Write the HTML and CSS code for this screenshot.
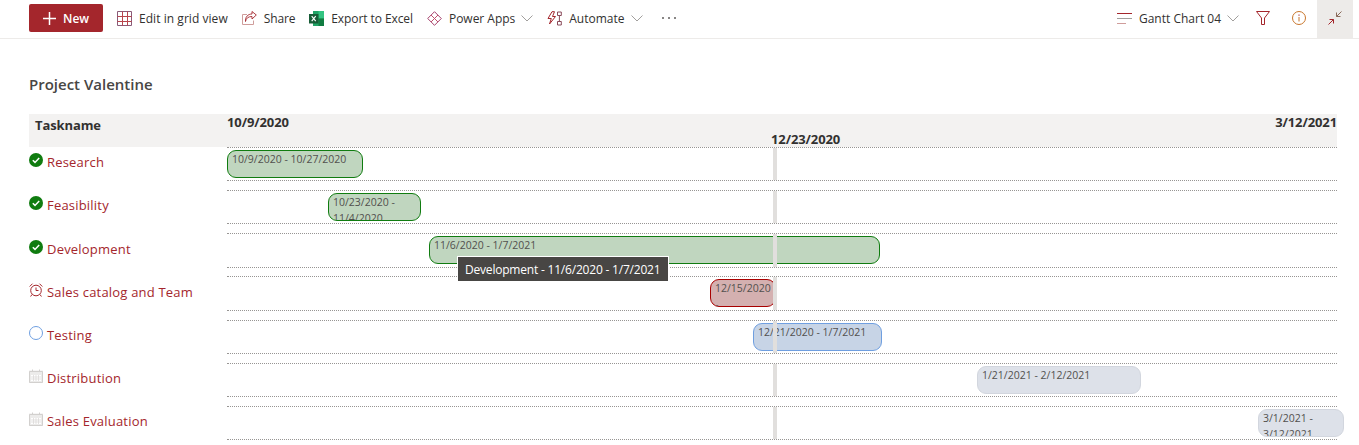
FILE: index.html
```html
<!DOCTYPE html>
<html lang="en">
<head>
  <meta charset="UTF-8">
  <title>Project Valentine</title>
  <link rel="stylesheet" href="styles.css">
</head>
<body>
  <div class="toolbar">
    <button class="new-btn">
      <svg width="13" height="13" viewBox="0 0 13 13"><path d="M6.500 0v13M0 6.500h13" stroke="#fff" stroke-width="1.500" fill="none"/></svg>
      New
    </button>
    <div class="cmd cmd-grid">
      <svg width="15" height="15" viewBox="0 0 15 15" fill="none"><path d="M.5.500h14v14H.5z" stroke="#8a5a78"/><path d="M.5 5.500h14M.5 10.500h14M5.500.5v14M10.500.5v14" stroke="#b8454c"/></svg>
      Edit in grid view
    </div>
    <div class="cmd cmd-share">
      <svg width="15" height="15" viewBox="0 0 15 15" fill="none"><path d="M5 3.500H.5v10h11V9.500" stroke="#cf9d9b"/><path d="M3.500 10.500C4 7 6.500 5.500 10 5.500V8l4.300-4L10 .5V3C6 3 3 6 3.500 10.500z" stroke="#a4262c" stroke-width=".9"/></svg>
      Share
    </div>
    <div class="cmd cmd-excel">
      <svg width="15" height="15" viewBox="0 0 15 15"><path d="M4 0h11v15H4z" fill="#21a366"/><path d="M9.500 0H15v7.500H9.500z" fill="#33c481"/><path d="M9.500 7.500H15V15H9.500z" fill="#107c41"/><path d="M0 3h9.500v9.500H0z" fill="#185c37"/><path d="M2.700 5.200l4 5M6.700 5.200l-4 5" stroke="#fff" stroke-width="1.100"/></svg>
      Export to Excel
    </div>
    <div class="cmd cmd-apps">
      <svg width="15" height="15" viewBox="0 0 15 15" fill="none" stroke-linejoin="round"><path d="M7.500.7l6.800 6.800-6.800 6.800L.7 7.500z" stroke="#a4406c"/><path d="M4 4l7 7M11 4l-7 7" stroke="#c0506c"/></svg>
      Power Apps
      <svg class="chev" width="12" height="7" viewBox="0 0 12 7" fill="none"><path d="M.5.5L6 6 11.500.5" stroke="#a19f9d"/></svg>
    </div>
    <div class="cmd cmd-auto">
      <svg width="15" height="15" viewBox="0 0 15 15" fill="none"><path d="M5 .7L1 7.500h3.300L2.500 13l6-7.500H5.500L7.500.7z" stroke="#a4262c"/><path d="M10.500 1h3.800v3.500h-3.800zM10.500 10.500h3.800V14h-3.800zM12.400 4.500v6" stroke="#8a4a5a"/></svg>
      Automate
      <svg class="chev" width="12" height="7" viewBox="0 0 12 7" fill="none"><path d="M.5.5L6 6 11.500.5" stroke="#a19f9d"/></svg>
    </div>
    <div class="more">
      <span class="dot"></span><span class="dot"></span><span class="dot"></span>
    </div>

    <div class="toolbar-right">
      <div class="cmd cmd-view">
        <svg width="15" height="11" viewBox="0 0 15 11" fill="none"><path d="M0 .5h15" stroke="#a4262c"/><path d="M0 5.500h15" stroke="#a19f9d"/><path d="M0 10.500h9" stroke="#cf9d9b"/></svg>
        Gantt Chart 04
        <svg class="chev" width="12" height="7" viewBox="0 0 12 7" fill="none"><path d="M.5.5L6 6 11.500.5" stroke="#a19f9d"/></svg>
      </div>
      <svg class="icon-filter" width="14" height="14" viewBox="0 0 14 14" fill="none"><path d="M.5.500h13L8.500 7v6.500h-3V7z" stroke="#a4262c"/></svg>
      <svg class="icon-info" width="14" height="14" viewBox="0 0 14 14" fill="none"><circle cx="7" cy="7" r="6.500" stroke="#c8762c"/><path d="M7 6v4.500" stroke="#c8762c"/><path d="M7 3.500v1.300" stroke="#a4262c"/></svg>
      <div class="compress">
        <svg width="14" height="14" viewBox="0 0 14 14" fill="none"><path d="M13.500.5L8.500 5.500M8.500 1.500v4h4" stroke="#8a6a5a"/><path d="M.5 13.500l5-5M5.500 12.500v-4h-4" stroke="#a4262c"/></svg>
      </div>
    </div>
  </div>

  <div class="content">
    <h1 class="page-title">Project Valentine</h1>

    <div class="gantt">
      <div class="gantt-head">
        <div class="head-name">Taskname</div>
        <div class="head-dates">
          <span>10/9/2020</span>
          <span class="head-today">12/23/2020</span>
          <span>3/12/2021</span>
        </div>
      </div>

      <div class="row">
        <div class="task">
          <svg class="task-icon" width="14" height="14" viewBox="0 0 14 14"><circle cx="7" cy="7" r="7" fill="#107c10"/><path d="M3.800 7.200l2.200 2.200 4.200-4.400" stroke="#fff" stroke-width="1.500" fill="none"/></svg>
          <a class="task-link">Research</a>
        </div>
        <div class="track">
          <div class="bar bar-done" style="left:0;width:136px">10/9/2020 - 10/27/2020</div>
          <div class="today"></div>
        </div>
      </div>

      <div class="row">
        <div class="task">
          <svg class="task-icon" width="14" height="14" viewBox="0 0 14 14"><circle cx="7" cy="7" r="7" fill="#107c10"/><path d="M3.800 7.200l2.200 2.200 4.200-4.400" stroke="#fff" stroke-width="1.500" fill="none"/></svg>
          <a class="task-link">Feasibility</a>
        </div>
        <div class="track">
          <div class="bar bar-done" style="left:101px;width:93px">10/23/2020 - 11/4/2020</div>
          <div class="today"></div>
        </div>
      </div>

      <div class="row">
        <div class="task">
          <svg class="task-icon" width="14" height="14" viewBox="0 0 14 14"><circle cx="7" cy="7" r="7" fill="#107c10"/><path d="M3.800 7.200l2.200 2.200 4.200-4.400" stroke="#fff" stroke-width="1.500" fill="none"/></svg>
          <a class="task-link">Development</a>
        </div>
        <div class="track">
          <div class="bar bar-done" style="left:202px;width:451px">11/6/2020 - 1/7/2021</div>
          <div class="today"></div>
        </div>
      </div>

      <div class="row">
        <div class="task">
          <svg class="task-icon" width="14" height="14" viewBox="0 0 14 14" fill="none"><circle cx="7" cy="7.500" r="5.300" stroke="#a4262c"/><path d="M7 4.500v3h2.500M.7 3.500L3.500.7M13.300 3.500L10.500.7M3 11.500L1.600 13.500M11 11.500l1.400 2" stroke="#a4262c"/></svg>
          <a class="task-link">Sales catalog and Team</a>
        </div>
        <div class="track">
          <div class="bar bar-late" style="left:483px;width:66px">12/15/2020 -</div>
          <div class="today"></div>
        </div>
      </div>

      <div class="row">
        <div class="task">
          <svg class="task-icon" width="14" height="14" viewBox="0 0 14 14" fill="none"><circle cx="7" cy="7" r="6.500" stroke="#6f9fe0"/></svg>
          <a class="task-link">Testing</a>
        </div>
        <div class="track">
          <div class="bar bar-open" style="left:526px;width:129px">12/21/2020 - 1/7/2021</div>
          <div class="today"></div>
        </div>
      </div>

      <div class="row">
        <div class="task">
          <svg class="task-icon" width="14" height="14" viewBox="0 0 14 14" fill="none"><path d="M0 1.500h14V14H0z" fill="#ecebea"/><path d="M.5 2.500h13v11H.5z" stroke="#d2d0ce"/><path d="M3.500 .5v2M10.500 .5v2" stroke="#d2d0ce"/><path d="M2 6h10v6H2z" fill="#fff"/><path d="M2 8h10M2 10h10M4.500 6v6M7 6v6M9.500 6v6" stroke="#d8d6d4" stroke-width=".7"/></svg>
          <a class="task-link">Distribution</a>
        </div>
        <div class="track">
          <div class="bar bar-plan" style="left:750px;width:164px">1/21/2021 - 2/12/2021</div>
          <div class="today"></div>
        </div>
      </div>

      <div class="row">
        <div class="task">
          <svg class="task-icon" width="14" height="14" viewBox="0 0 14 14" fill="none"><path d="M0 1.500h14V14H0z" fill="#ecebea"/><path d="M.5 2.500h13v11H.5z" stroke="#d2d0ce"/><path d="M3.500 .5v2M10.500 .5v2" stroke="#d2d0ce"/><path d="M2 6h10v6H2z" fill="#fff"/><path d="M2 8h10M2 10h10M4.500 6v6M7 6v6M9.500 6v6" stroke="#d8d6d4" stroke-width=".7"/></svg>
          <a class="task-link">Sales Evaluation</a>
        </div>
        <div class="track">
          <div class="bar bar-plan" style="left:1031px;width:86px">3/1/2021 - 3/12/2021</div>
          <div class="today"></div>
        </div>
      </div>

      <div class="tooltip">Development - 11/6/2020 - 1/7/2021</div>
    </div>
  </div>
</body>
</html>
```

FILE: styles.css
```css
html, body {
  margin: 0;
  height: 100%;
  overflow: hidden;
  background-color: #fff;
  font-family: "Open Sans", "Noto Sans", sans-serif;
  font-size: 12px;
  color: #323130;
}

/* command bar */
.toolbar {
  display: flex;
  align-items: center;
  box-sizing: content-box;
  height: 36px;
  padding: 0 0 2px 29px;
  border-bottom: 1px solid #edebe9;
}
.new-btn {
  display: flex;
  align-items: center;
  gap: 7px;
  width: 74px;
  height: 28px;
  margin-right: 14px;
  padding: 0 0 0 14px;
  background-color: #a4262c;
  color: #fff;
  border: none;
  border-radius: 2px;
  font-family: inherit;
  font-size: 12px;
  font-weight: 600;
}
.cmd {
  display: flex;
  align-items: center;
  gap: 7px;
  white-space: nowrap;
  letter-spacing: -0.15px;
}
.cmd-grid { margin-right: 14px; letter-spacing: 0.05px; }
.cmd-share { margin-right: 14px; }
.cmd-excel { margin-right: 14px; letter-spacing: -0.08px; }
.cmd-apps { margin-right: 14px; letter-spacing: -0.02px; }
.cmd-auto { margin-right: 19px; letter-spacing: 0; }
.cmd-view { letter-spacing: 0; margin-bottom: 2px; }
.chev { margin-left: -1px; }
.more {
  display: flex;
  gap: 4px;
}
.dot {
  width: 2px;
  height: 2px;
  border-radius: 50%;
  background-color: #605e5c;
}
.toolbar-right {
  display: flex;
  align-items: center;
  align-self: stretch;
  margin: 0 6px -2px auto;
}
.icon-filter { margin: 0 0 2px 17px; }
.icon-info { margin: 0 0 2px 22px; }
.compress {
  display: flex;
  align-items: center;
  justify-content: center;
  align-self: stretch;
  width: 36px;
  margin-left: 11px;
  padding-bottom: 2px;
  box-sizing: border-box;
  background-color: #edebe9;
}

/* chart */
.content {
  padding: 0 22px 0 29px;
}
.page-title {
  margin: 34px 0 19px;
  height: 22px;
  line-height: 22px;
  font-size: 15px;
  font-weight: 600;
  color: #484644;
}
.gantt {
  position: relative;
}
.gantt-head {
  display: flex;
  height: 33px;
  background-color: #f3f2f1;
  font-size: 13px;
  font-weight: 700;
  letter-spacing: -0.1px;
}
.head-name {
  width: 192px;
  padding: 2px 0 0 6px;
}
.head-dates {
  position: relative;
  display: flex;
  justify-content: space-between;
  flex: 1;
  line-height: 17px;
}
.head-today {
  position: absolute;
  left: 544px;
  top: 17px;
}
.row {
  display: flex;
  height: 34.3px;
  margin-bottom: 8.87px;
}
.task {
  display: flex;
  align-items: flex-start;
  gap: 4px;
  width: 198px;
  padding-top: 6.3px;
}
.task-icon {
  flex-shrink: 0;
}
.task-link {
  color: #a4262c;
  font-size: 13px;
  line-height: 18px;
  letter-spacing: 0.2px;
}
.track {
  position: relative;
  flex: 1;
  border-top: 1px dotted #979593;
  border-bottom: 1px dotted #979593;
}
.bar {
  position: absolute;
  top: 2px;
  height: 28px;
  box-sizing: border-box;
  padding: 0 4px;
  overflow: hidden;
  border: 1px solid;
  border-radius: 9px;
  font-size: 10.500px;
  line-height: 16px;
  color: #52504e;
}
.bar-done { background-color: #c0d6bf; border-color: #107c10; }
.bar-late { background-color: #d4b0b0; border-color: #a80000; }
.bar-open { background-color: #c7d4e6; border-color: #6f9fe0; }
.bar-plan { background-color: #dde1e9; border-color: #d2d6de; }
.today {
  position: absolute;
  left: 546px;
  top: 0;
  bottom: 0;
  width: 4px;
  background-color: #e1dfdd;
}

.tooltip {
  position: absolute;
  left: 428px;
  top: 142px;
  padding: 4px 8px 3px 7px;
  background-color: #484644;
  border: 1px solid #fff;
  color: #fff;
  line-height: 17px;
  white-space: nowrap;
  letter-spacing: -0.2px;
}
```
